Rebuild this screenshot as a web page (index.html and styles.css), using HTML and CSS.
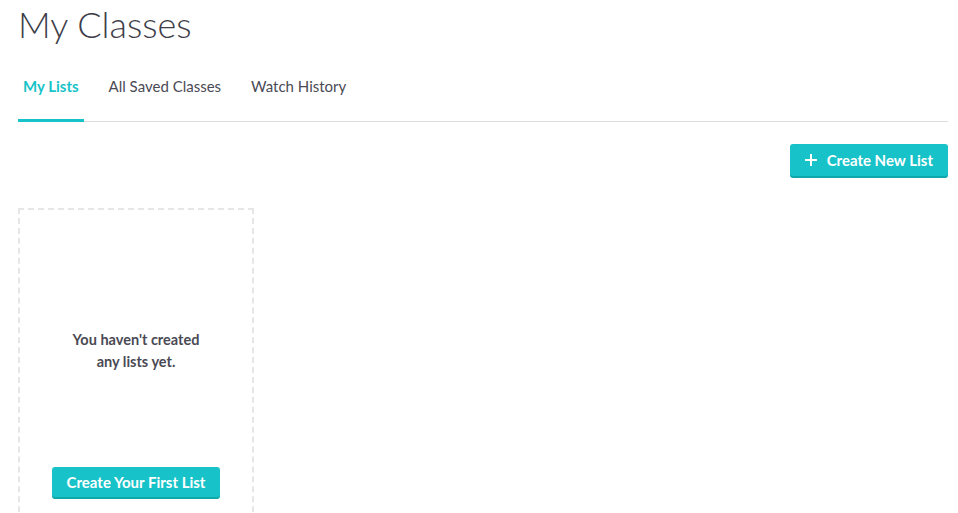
FILE: index.html
```html
<!DOCTYPE html>
<html lang="en">
<head>
    <meta charset="UTF-8">
    <meta name="viewport" content="width=device-width, initial-scale=1.0">
    <title>My Classes</title>
    <link rel="stylesheet" href="styles.css">
</head>
<body>
    <main class="page">
        <h1 class="page-title">My Classes</h1>
        <nav class="tabs">
            <a href="#" class="tab active">My Lists</a>
            <a href="#" class="tab">All Saved Classes</a>
            <a href="#" class="tab">Watch History</a>
        </nav>
        <div class="toolbar">
            <button class="btn btn-new">
                <svg class="plus" width="12" height="12" viewBox="0 0 12 12"><path d="M6 0v12M0 6h12" stroke="#fff" stroke-width="2"/></svg>
                Create New List
            </button>
        </div>
        <div class="lists">
            <div class="empty-card">
                <p class="empty-text">You haven't created<br>any lists yet.</p>
                <button class="btn btn-first">Create Your First List</button>
            </div>
        </div>
    </main>
</body>
</html>
```

FILE: styles.css
```css
body {
    margin: 0;
    font-family: Lato, "Open Sans", sans-serif;
    color: #4a4a55;
    background: white;
}
.page {
    padding: 0 10px 0 18px;
}
.page-title {
    margin: 0;
    padding-top: 2px;
    font-size: 36px;
    font-weight: 300;
    line-height: 44px;
    color: #3d3d48;
}
.tabs {
    display: flex;
    margin-top: 18px;
    border-bottom: 1px solid #dcdcdc;
}
.tab {
    padding: 12px 5px 23px;
    margin-right: 20px;
    font-size: 15px;
    line-height: 20px;
    color: #4a4a55;
    text-decoration: none;
    border-bottom: 3px solid transparent;
    margin-bottom: -1px;
}
.tab.active {
    color: #17c3c8;
    font-weight: 700;
    border-bottom-color: #17c3c8;
}
.toolbar {
    display: flex;
    justify-content: flex-end;
    margin-top: 22px;
}
.btn {
    border: none;
    border-radius: 3px;
    background: #17c3c8;
    color: white;
    font-family: inherit;
    font-size: 15px;
    font-weight: 700;
    cursor: pointer;
    box-shadow: 0 2px 0 #10a7ab;
    display: flex;
    align-items: center;
}
.btn-new {
    height: 32px;
    padding: 0 15px;
}
.plus {
    margin-right: 10px;
}
.lists {
    margin-top: 32px;
}
.empty-card {
    width: 232px;
    height: 330px;
    border: 2px dashed #e6e6e6;
    display: flex;
    flex-direction: column;
    align-items: center;
}
.empty-text {
    margin: 119px 0 0;
    text-align: center;
    font-size: 14.5px;
    font-weight: 700;
    line-height: 22px;
}
.btn-first {
    margin-top: 94px;
    height: 30px;
    padding: 0 15px;
}
```
